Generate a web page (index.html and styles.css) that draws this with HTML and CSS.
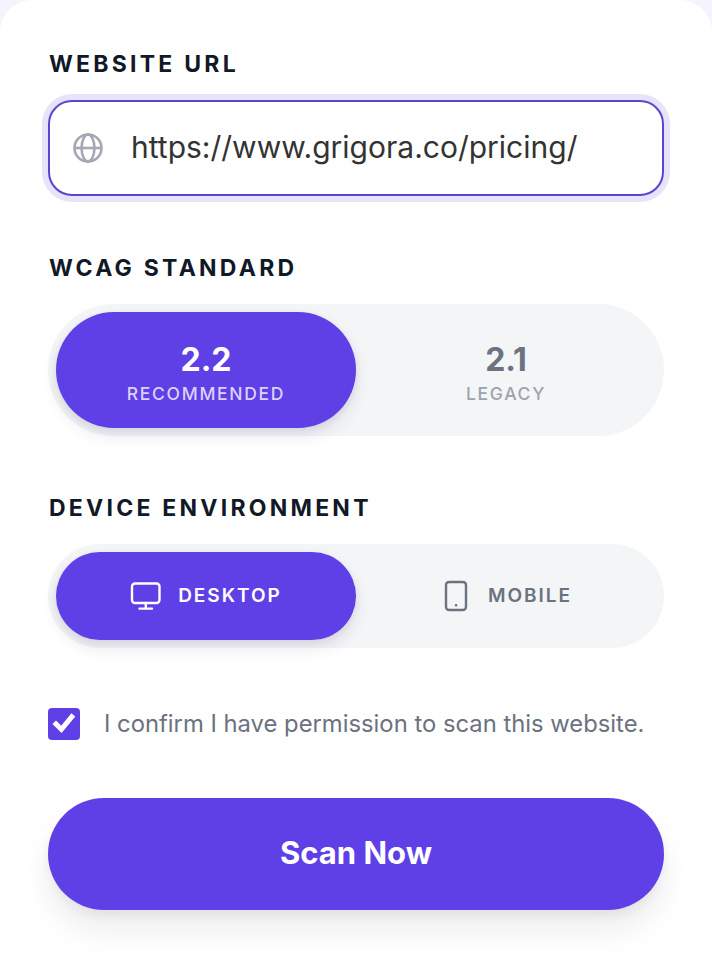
FILE: index.html
```html
<!DOCTYPE html>
<html lang="en">
<head>
<meta charset="utf-8">
<title>Website scan</title>
<link rel="stylesheet" href="styles.css">
</head>
<body>
<main class="card">
  <section class="field url-field">
    <div class="label">WEBSITE URL</div>
    <div class="input">
      <svg class="globe" viewBox="0 0 30 30" fill="none" stroke="currentColor" stroke-width="2.6">
        <circle cx="15" cy="15" r="13.5"/>
        <ellipse cx="15" cy="15" rx="6.4" ry="13.5"/>
        <path d="M1.5 15H28.5"/>
      </svg>
      <span class="url">https://www.grigora.co/pricing/</span>
    </div>
  </section>
  <section class="field std-field">
    <div class="label">WCAG STANDARD</div>
    <div class="segment std">
      <div class="opt active"><span class="num">2.2</span><span class="sub">RECOMMENDED</span></div>
      <div class="opt"><span class="num">2.1</span><span class="sub">LEGACY</span></div>
    </div>
  </section>
  <section class="field device-field">
    <div class="label">DEVICE ENVIRONMENT</div>
    <div class="segment device">
      <div class="opt row active">
        <svg class="ico" viewBox="0 0 32 32" fill="none" stroke="currentColor" stroke-width="2.4" stroke-linecap="round" stroke-linejoin="round">
          <rect x="2" y="3.5" width="27.5" height="19.5" rx="3"/>
          <path d="M15.75 23V28.2M9.5 28.6H22"/>
        </svg>
        <span class="dev">DESKTOP</span>
      </div>
      <div class="opt row">
        <svg class="ico" viewBox="0 0 32 32" fill="none" stroke="currentColor" stroke-width="2.4" stroke-linecap="round" stroke-linejoin="round">
          <rect x="6" y="2" width="20" height="28" rx="3"/>
          <path d="M16 25.2h.1"/>
        </svg>
        <span class="dev">MOBILE</span>
      </div>
    </div>
  </section>
  <label class="confirm">
    <span class="box">
      <svg viewBox="0 0 32 32" fill="none" stroke="#fff" stroke-width="5" stroke-linecap="square">
        <path d="M8 16L13.4 21.4L23.8 8.8"/>
      </svg>
    </span>
    <span class="confirm-text">I confirm I have permission to scan this website.</span>
  </label>
  <button class="scan" type="button">Scan Now</button>
</main>
</body>
</html>
```
FILE: styles.css
```css
* { box-sizing: border-box; }
html, body { margin: 0; height: 958px; overflow: hidden; }
body {
  background: #f5f3fc;
  font-family: Inter, "Liberation Sans", sans-serif;
  width: 712px;
}
.card {
  height: 958px;
  background: #fff;
  border-radius: 32px 32px 0 0;
  padding: 48px 48px 0;
  display: flex;
  flex-direction: column;
}
.label {
  font-size: 23px;
  line-height: 32px;
  font-weight: 700;
  letter-spacing: 3.24px;
  color: #111827;
  padding-left: 1px;
}
.url-field .label { margin-bottom: 20px; }
.input {
  height: 96px;
  border: 2px solid #5b45d0;
  border-radius: 24px;
  box-shadow: 0 0 0 6px #e8e3fb;
  background: #fff;
  display: flex;
  align-items: center;
  padding-left: 23px;
  gap: 28px;
}
.globe { width: 30px; height: 30px; color: #a3a8b3; flex: none; }
.url { font-size: 30px; color: #333; line-height: 38px; margin-top: -2px; }
.std-field { margin-top: 56px; }
.device-field { margin-top: 56px; }
.std-field .label, .device-field .label { margin-bottom: 20px; }
.segment {
  background: #f3f5f7;
  padding: 8px;
  display: flex;
  border-radius: 66px;
}
.std { height: 132px; }
.device { height: 104px; border-radius: 52px; }
.opt {
  flex: 1 1 0;
  border-radius: 58px;
  display: flex;
  flex-direction: column;
  align-items: center;
  justify-content: center;
  color: #6b7280;
}
.opt.active {
  background: #5f3fe6;
  color: #fff;
  box-shadow: 0 8px 16px rgba(40, 30, 90, .1), 0 2px 6px rgba(40, 30, 90, .07);
}
.num { font-size: 32px; line-height: 40px; font-weight: 700; margin-top: 6px; }
.sub {
  font-size: 17.5px;
  line-height: 24px;
  letter-spacing: 1.7px;
  font-weight: 500;
  color: #9ca3af;
  margin-top: 2px;
}
.active .sub { color: #dcd2fc; }
.row { flex-direction: row; gap: 16px; }
.ico { width: 32px; height: 32px; flex: none; }
.dev { font-size: 19px; line-height: 28px; letter-spacing: 2px; font-weight: 600; }
.confirm {
  margin-top: 60px;
  display: flex;
  align-items: center;
  gap: 24px;
}
.box {
  width: 32px;
  height: 32px;
  border-radius: 4px;
  background: #5f3fe6;
  display: block;
  flex: none;
}
.box svg { display: block; width: 32px; height: 32px; }
.confirm-text { font-size: 23.8px; line-height: 32px; color: #6b7280; white-space: nowrap; }
.scan {
  margin-top: 58px;
  height: 112px;
  border: 0;
  border-radius: 56px;
  background: #5f3fe6;
  color: #fff;
  font-family: inherit;
  font-size: 31px;
  font-weight: 700;
  padding-bottom: 4px;
  box-shadow: 0 20px 30px rgba(20, 20, 50, .08), 0 6px 10px rgba(20, 20, 50, .05);
}
```
